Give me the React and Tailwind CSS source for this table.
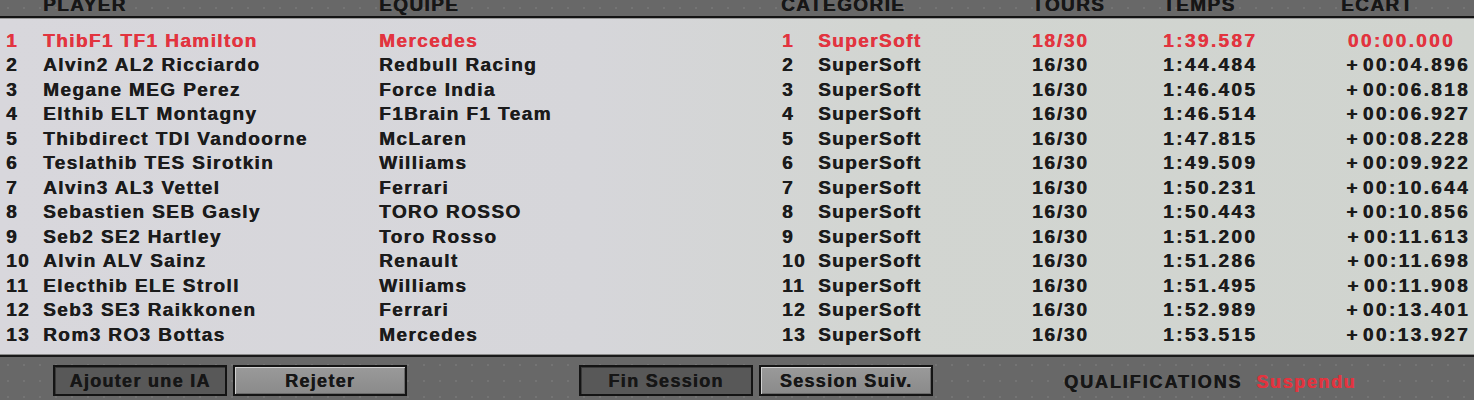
import React from "react";

const rows = [
  ["1", "ThibF1 TF1 Hamilton", "Mercedes", "1", "SuperSoft", "18/30", "1:39.587", "00:00.000"],
  ["2", "Alvin2 AL2 Ricciardo", "Redbull Racing", "2", "SuperSoft", "16/30", "1:44.484", "+00:04.896"],
  ["3", "Megane MEG Perez", "Force India", "3", "SuperSoft", "16/30", "1:46.405", "+00:06.818"],
  ["4", "Elthib ELT Montagny", "F1Brain F1 Team", "4", "SuperSoft", "16/30", "1:46.514", "+00:06.927"],
  ["5", "Thibdirect TDI Vandoorne", "McLaren", "5", "SuperSoft", "16/30", "1:47.815", "+00:08.228"],
  ["6", "Teslathib TES Sirotkin", "Williams", "6", "SuperSoft", "16/30", "1:49.509", "+00:09.922"],
  ["7", "Alvin3 AL3 Vettel", "Ferrari", "7", "SuperSoft", "16/30", "1:50.231", "+00:10.644"],
  ["8", "Sebastien SEB Gasly", "TORO ROSSO", "8", "SuperSoft", "16/30", "1:50.443", "+00:10.856"],
  ["9", "Seb2 SE2 Hartley", "Toro Rosso", "9", "SuperSoft", "16/30", "1:51.200", "+00:11.613"],
  ["10", "Alvin ALV Sainz", "Renault", "10", "SuperSoft", "16/30", "1:51.286", "+00:11.698"],
  ["11", "Electhib ELE Stroll", "Williams", "11", "SuperSoft", "16/30", "1:51.495", "+00:11.908"],
  ["12", "Seb3 SE3 Raikkonen", "Ferrari", "12", "SuperSoft", "16/30", "1:52.989", "+00:13.401"],
  ["13", "Rom3 RO3 Bottas", "Mercedes", "13", "SuperSoft", "16/30", "1:53.515", "+00:13.927"],
];

const grid = "grid grid-cols-[37px_336px_403px_36px_214px_131px_150px_1fr] pl-[6px] pr-[4px]";
const font = { fontFamily: '"Liberation Sans", Arial, sans-serif' };
const heavy = "[text-shadow:0.5px_0_0_currentColor]";

function Row({ r, first }) {
  const color = first ? "text-[#e2343f]" : "text-[#1b1b1b]";
  const ecart = r[7];
  return (
    <div className={`${grid} h-[24.5px] items-center text-[19px] font-bold tracking-[1.4px] leading-none ${heavy} ${color}`}>
      <div>{r[0]}</div>
      <div>{r[1]}</div>
      <div>{r[2]}</div>
      <div>{r[3]}</div>
      <div>{r[4]}</div>
      <div className="tracking-[1.8px]">{r[5]}</div>
      <div className="tracking-[2.4px]">{r[6]}</div>
      <div className="text-right tracking-[2.4px]">
        {ecart.startsWith("+") ? (
          <span>
            <span className="mr-[3px]">+</span>
            {ecart.slice(1)}
          </span>
        ) : (
          <span className="pr-[15px]">{ecart}</span>
        )}
      </div>
    </div>
  );
}

function Btn({ label, dark }) {
  return (
    <div
      className={`h-[31px] w-[174px] border-2 border-[#141414] flex items-center justify-center pt-[2px] text-[18px] font-bold tracking-[1.3px] text-[#161616] ${heavy} ${
        dark
          ? "bg-[#585858] shadow-[inset_1px_1px_0_#3a3a3a]"
          : "bg-[linear-gradient(#9a9a9a,#8a8a8a)] shadow-[inset_1px_1px_0_#d0d0d0,inset_-1px_-1px_0_#6a6a6a]"
      }`}
    >
      {label}
    </div>
  );
}

export default function App() {
  const dots =
    "bg-[#686868] bg-[radial-gradient(circle,#747474_1px,transparent_1.5px)] bg-[length:16px_16px]";
  return (
    <div style={font} className="w-[1474px] h-[400px] overflow-hidden flex flex-col bg-[#686868]">
      {/* header */}
      <div className={`h-[16px] overflow-hidden ${dots}`}>
        <div className={`${grid} mt-[-5px] text-[19px] font-bold tracking-[1.4px] leading-[20px] text-[#161616] ${heavy}`}>
          <div></div>
          <div>PLAYER</div>
          <div>EQUIPE</div>
          <div className="-ml-[1px]">CATEGORIE</div>
          <div></div>
          <div>TOURS</div>
          <div>TEMPS</div>
          <div className="pl-[28px]">ECART</div>
        </div>
      </div>
      <div className="h-[2px] bg-[#141414]" />
      <div className="h-[1px] bg-[#9a9a9a]" />
      {/* panel */}
      <div className="h-[335px] pt-[9px] bg-[linear-gradient(90deg,#d8d7dc_0%,#d6d6da_40%,#d2d5d1_60%,#d0d4cf_100%)]">
        {rows.map((r, i) => (
          <Row key={i} r={r} first={i === 0} />
        ))}
      </div>
      <div className="h-[1px] bg-[#8a8a8a]" />
      <div className="h-[2px] bg-[#1a1a1a]" />
      {/* bottom bar */}
      <div className={`flex-1 flex items-start pt-[8px] ${dots}`}>
        <div className="ml-[53px] flex gap-[6px]">
          <Btn label="Ajouter une IA" dark />
          <Btn label="Rejeter" />
        </div>
        <div className="ml-[172px] flex gap-[6px]">
          <Btn label="Fin Session" dark />
          <Btn label="Session Suiv." />
        </div>
        <div className={`ml-[131px] h-[31px] pt-[3px] flex items-center text-[18px] font-bold tracking-[1.9px] text-[#161616] ${heavy}`}>
          QUALIFICATIONS
          <span className="ml-[14px] text-[#e2343f] tracking-[1.6px]">Suspendu</span>
        </div>
      </div>
    </div>
  );
}
